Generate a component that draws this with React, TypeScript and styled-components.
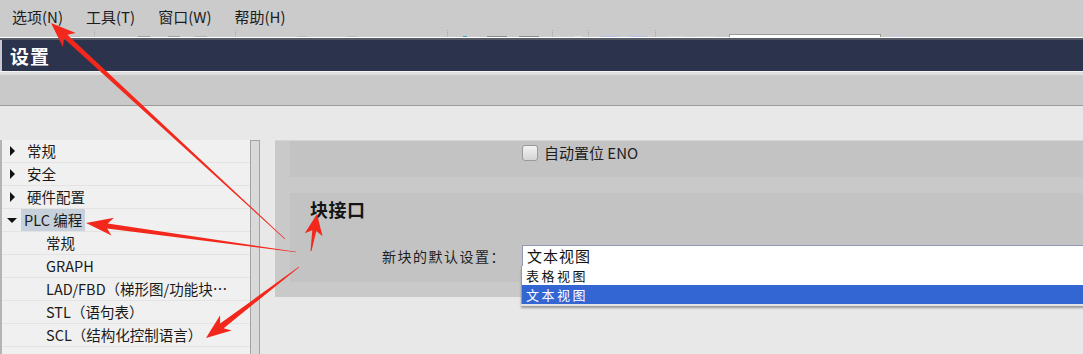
import React, { FC } from "react";
import styled, { createGlobalStyle } from "styled-components";

const GlobalStyle = createGlobalStyle`
  html, body {
    margin: 0;
    padding: 0;
    width: 1083px;
    height: 354px;
    overflow: hidden;
    background: #e8e8e8;
  }
  body {
    font-family: "Noto Sans CJK SC", "Noto Sans", sans-serif;
    color: #1a1a1a;
  }
`;

const Page = styled.div`
  position: relative;
  width: 1083px;
  height: 354px;
  display: flex;
  flex-direction: column;
  overflow: hidden;
`;

const MenuBar = styled.div`
  height: 30px;
  background: #cbcbcb;
  display: flex;
  align-items: center;
  gap: 23px;
  padding-left: 12px;
  font-size: 15px;
  line-height: 1;
`;

const MenuItem = styled.span`
  color: #1c1c1c;
  padding-top: 3px;
`;

const ToolStrip = styled.div`
  height: 7px;
  background: #cbcbcb;
  display: flex;
  align-items: flex-end;
`;

const ToolSep = styled.div<{ $at: number }>`
  margin-left: ${p => p.$at}px;
  width: 1px;
  height: 7px;
  border-left: 1px dotted #a8a8a8;
`;

const ToolIcon = styled.div<{ $at: number; $w: number; $c: string }>`
  margin-left: ${p => p.$at}px;
  width: ${p => p.$w}px;
  height: 1px;
  background: ${p => p.$c};
`;

const ToolInput = styled.div<{ $at: number }>`
  margin-left: ${p => p.$at}px;
  width: 150px;
  height: 2px;
  background: #fff;
  border: 1px solid #9a9a9a;
  border-bottom: none;
`;

const FrameEdge = styled.div`
  height: 1px;
  background: #ffffff;
  border-bottom: 2px solid #555a66;
`;

const TitleBar = styled.div`
  height: 31px;
  background: #2c334d;
  display: flex;
  align-items: center;
  padding-left: 8px;
  border-left: 2px solid #c8c8d0;
  color: #ffffff;
  font-size: 19px;
  font-weight: 700;
  letter-spacing: 1px;
`;

const SubBand = styled.div`
  height: 33px;
  background: #c9c9c9;
  border-top: 1px solid #f4f4f4;
  box-shadow: inset 0 3px 0 #dedede;
  border-bottom: 1px solid #9c9c9c;
`;

const Body = styled.div`
  flex: 1;
  display: flex;
  background: #e8e8e8;
  padding-top: 34px;
  overflow: hidden;
`;

const Tree = styled.div`
  width: 248px;
  background: #f0f0f0;
  border-left: 2px solid #b4b4b4;
  display: flex;
  flex-direction: column;
  font-size: 14.5px;
`;

const TreeRow = styled.div<{ $depth: number }>`
  height: 23px;
  flex: none;
  display: flex;
  align-items: center;
  border-bottom: 1px solid #e3e3e3;
  box-sizing: border-box;
  padding-left: ${p => (p.$depth ? 41 : 5)}px;
  white-space: nowrap;
`;

const Toggle = styled.span<{ $open: boolean }>`
  width: 0;
  height: 0;
  margin-right: ${p => (p.$open ? 4 : 9)}px;
  margin-left: ${p => (p.$open ? 0 : 3)}px;
  border-style: solid;
  border-color: transparent;
  ${p =>
    p.$open
      ? `border-width: 5px 5px 0 5px; border-top-color: #111;`
      : `border-width: 5px 0 5px 5px; border-left-color: #111;`}
`;

const TreeLabel = styled.span<{ $selected?: boolean }>`
  padding: 1px 3px 2px;
  line-height: 19px;
  background: ${p => (p.$selected ? "#c6d1dc" : "transparent")};
`;

const ScrollTrack = styled.div`
  width: 8px;
  background: #d9d9d9;
  border: 1px solid #a3a3a3;
  border-bottom: none;
`;

const Content = styled.div`
  flex: 1;
  margin-left: 15px;
  margin-right: -40px;
  align-self: flex-start;
`;

const OuterPanel = styled.div`
  background: #c9c9c9;
  border-top: 1px solid #d6d6d6;
  padding: 0 0 15px 15px;
  display: flex;
  flex-direction: column;
  gap: 16px;
`;

const Section = styled.div<{ $h: number }>`
  height: ${p => p.$h}px;
  background: #c3c3c3;
  display: flex;
  flex-direction: column;
`;

const CheckRow = styled.label`
  display: flex;
  align-items: center;
  gap: 6px;
  margin-left: 232px;
  margin-top: 1px;
  font-size: 15px;
  color: #1e1e1e;
`;

const CheckBox = styled.span`
  width: 14px;
  height: 14px;
  border: 1px solid #9a9a9a;
  border-radius: 3px;
  background: linear-gradient(#f4f4f4, #d4d4d4);
`;

const SectionTitle = styled.div`
  margin: 3px 0 0 20px;
  font-size: 18px;
  font-weight: 700;
  color: #141414;
  letter-spacing: 0.5px;
`;

const FieldRow = styled.div`
  display: flex;
  align-items: center;
  margin-top: 23px;
`;

const FieldLabel = styled.span`
  width: 216px;
  text-align: right;
  padding-right: 16px;
  font-size: 14px;
  color: #1e1e1e;
  letter-spacing: 1.5px;
`;

const SelectWrap = styled.div`
  position: relative;
  flex: 1;
`;

const SelectBox = styled.div`
  height: 20px;
  line-height: 20px;
  background: #ffffff;
  border: 1px solid #8f99b3;
  border-right: none;
  display: flex;
  align-items: center;
  padding-left: 4px;
  font-size: 15px;
  color: #111;
  letter-spacing: 1px;
`;

const DropList = styled.div`
  position: absolute;
  top: 21px;
  left: -1px;
  right: 0;
  background: #ffffff;
  border-left: 1px solid #8f99b3;
  box-shadow: 0 2px 0 #e4e4e4, 0 4px 2px #9a9a9a;
`;

const DropItem = styled.div<{ $active?: boolean }>`
  height: 19px;
  line-height: 19px;
  padding-left: 4px;
  font-size: 13px;
  letter-spacing: 2.5px;
  background: ${p => (p.$active ? "#3366d2" : "#ffffff")};
  color: ${p => (p.$active ? "#ffffff" : "#111")};
`;

const Overlay = styled.svg`
  position: absolute;
  top: 0;
  left: 0;
  pointer-events: none;
`;

type Pt = [number, number];

const arrowPoints = (tail: Pt, tip: Pt, tailW: number, shaftW: number, headLen: number, headW: number) => {
  const dx = tip[0] - tail[0];
  const dy = tip[1] - tail[1];
  const len = Math.hypot(dx, dy);
  const ux = dx / len;
  const uy = dy / len;
  const nx = -uy;
  const ny = ux;
  const bx = tip[0] - ux * headLen;
  const by = tip[1] - uy * headLen;
  const nbx = tip[0] - ux * headLen * 0.8;
  const nby = tip[1] - uy * headLen * 0.8;
  const pts: Pt[] = [
    [tail[0] + (nx * tailW) / 2, tail[1] + (ny * tailW) / 2],
    [nbx + (nx * shaftW) / 2, nby + (ny * shaftW) / 2],
    [bx + (nx * headW) / 2, by + (ny * headW) / 2],
    tip,
    [bx - (nx * headW) / 2, by - (ny * headW) / 2],
    [nbx - (nx * shaftW) / 2, nby - (ny * shaftW) / 2],
    [tail[0] - (nx * tailW) / 2, tail[1] - (ny * tailW) / 2]
  ];
  return pts.map(p => p.map(v => v.toFixed(1)).join(",")).join(" ");
};

const arrows = [
  { tail: [285, 239] as Pt, tip: [51, 23] as Pt, tailW: 0.6, shaftW: 5, headLen: 25, headW: 19 },
  { tail: [296, 252] as Pt, tip: [86, 223] as Pt, tailW: 0.6, shaftW: 5, headLen: 27, headW: 18 },
  { tail: [299, 267] as Pt, tip: [206, 338] as Pt, tailW: 0.6, shaftW: 6, headLen: 25, headW: 19 },
  { tail: [311, 251] as Pt, tip: [317, 214] as Pt, tailW: 1, shaftW: 4, headLen: 21, headW: 18 }
];

const treeItems = [
  { label: "常规", depth: 0, open: false },
  { label: "安全", depth: 0, open: false },
  { label: "硬件配置", depth: 0, open: false },
  { label: "PLC 编程", depth: 0, open: true, selected: true },
  { label: "常规", depth: 1 },
  { label: "GRAPH", depth: 1 },
  { label: "LAD/FBD（梯形图/功能块…", depth: 1 },
  { label: "STL（语句表）", depth: 1 },
  { label: "SCL（结构化控制语言）", depth: 1 }
];

const App: FC = () => {
  return (
    <Page>
      <GlobalStyle />
      <MenuBar>
        <MenuItem>选项(N)</MenuItem>
        <MenuItem>工具(T)</MenuItem>
        <MenuItem>窗口(W)</MenuItem>
        <MenuItem>帮助(H)</MenuItem>
      </MenuBar>
      <ToolStrip>
        <ToolIcon $at={70} $w={10} $c="#c0c0c0" />
        <ToolSep $at={14} />
        <ToolIcon $at={42} $w={12} $c="#a0a0a0" />
        <ToolIcon $at={18} $w={12} $c="#a0a0a0" />
        <ToolIcon $at={15} $w={12} $c="#b0b0b0" />
        <ToolSep $at={28} />
        <ToolIcon $at={60} $w={10} $c="#bababa" />
        <ToolIcon $at={40} $w={10} $c="#bababa" />
        <ToolSep $at={90} />
        <ToolIcon $at={14} $w={4} $c="#4a9bd0" />
        <ToolIcon $at={20} $w={20} $c="#8a8a8a" />
        <ToolIcon $at={12} $w={20} $c="#8a8a8a" />
        <ToolSep $at={13} />
        <ToolIcon $at={20} $w={8} $c="#dcdcdc" />
        <ToolSep $at={6} />
        <ToolIcon $at={10} $w={18} $c="#b4c0f0" />
        <ToolIcon $at={12} $w={18} $c="#b4c0f0" />
        <ToolSep $at={7} />
        <ToolIcon $at={10} $w={18} $c="#d4d4d4" />
        <ToolIcon $at={12} $w={18} $c="#d4d4d4" />
        <ToolInput $at={14} />
        <ToolIcon $at={10} $w={12} $c="#c0cbf0" />
      </ToolStrip>
      <FrameEdge />
      <TitleBar>设置</TitleBar>
      <SubBand />
      <Body>
        <Tree>
          {treeItems.map((item, i) => (
            <TreeRow key={i} $depth={item.depth}>
              {item.depth === 0 && <Toggle $open={!!item.open} />}
              <TreeLabel $selected={item.selected}>{item.label}</TreeLabel>
            </TreeRow>
          ))}
        </Tree>
        <ScrollTrack />
        <Content>
          <OuterPanel>
            <Section $h={36}>
              <CheckRow>
                <CheckBox />
                自动置位 ENO
              </CheckRow>
            </Section>
            <Section $h={89}>
              <SectionTitle>块接口</SectionTitle>
              <FieldRow>
                <FieldLabel>新块的默认设置：</FieldLabel>
                <SelectWrap>
                  <SelectBox>文本视图</SelectBox>
                  <DropList>
                    <DropItem>表格视图</DropItem>
                    <DropItem $active>文本视图</DropItem>
                  </DropList>
                </SelectWrap>
              </FieldRow>
            </Section>
          </OuterPanel>
        </Content>
      </Body>
      <Overlay width={1083} height={354} viewBox="0 0 1083 354">
        {arrows.map((a, i) => (
          <polygon
            key={i}
            points={arrowPoints(a.tail, a.tip, a.tailW, a.shaftW, a.headLen, a.headW)}
            fill="#f3281c"
          />
        ))}
      </Overlay>
    </Page>
  );
};

export default App;
